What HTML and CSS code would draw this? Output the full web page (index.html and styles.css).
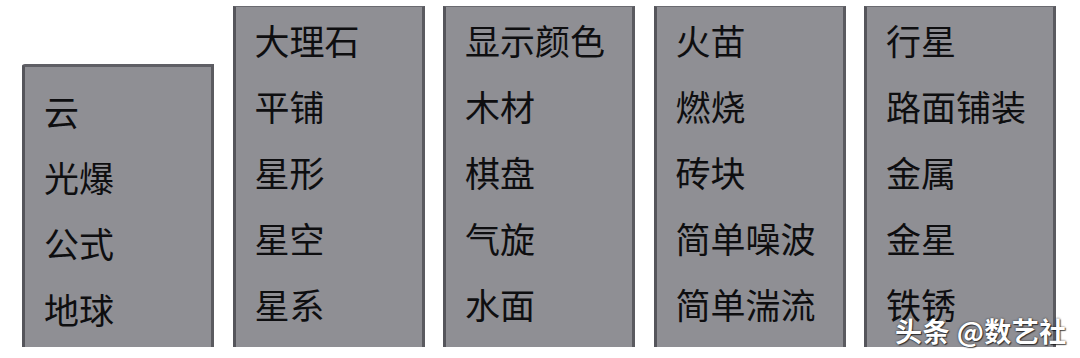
FILE: index.html
```html
<!DOCTYPE html>
<html lang="zh-CN">
<head>
<meta charset="utf-8">
<title>纹理菜单</title>
<link rel="stylesheet" href="styles.css">
</head>
<body>
<div class="stage">
  <ul class="menu menu-short">
    <li>云</li>
    <li>光爆</li>
    <li>公式</li>
    <li>地球</li>
  </ul>
  <ul class="menu">
    <li>大理石</li>
    <li>平铺</li>
    <li>星形</li>
    <li>星空</li>
    <li>星系</li>
  </ul>
  <ul class="menu">
    <li>显示颜色</li>
    <li>木材</li>
    <li>棋盘</li>
    <li>气旋</li>
    <li>水面</li>
  </ul>
  <ul class="menu">
    <li>火苗</li>
    <li>燃烧</li>
    <li>砖块</li>
    <li>简单噪波</li>
    <li>简单湍流</li>
  </ul>
  <ul class="menu">
    <li>行星</li>
    <li>路面铺装</li>
    <li>金属</li>
    <li>金星</li>
    <li>铁锈</li>
  </ul>
  <div class="watermark">头条 @数艺社</div>
</div>
</body>
</html>
```

FILE: styles.css
```css
html, body {
  margin: 0;
  padding: 0;
  background: #ffffff;
}

.stage {
  position: relative;
  width: 1080px;
  height: 358px;
  box-sizing: border-box;
  display: flex;
  align-items: flex-end;
  gap: 18.5px;
  padding: 0 0 11px 22px;
}

.menu {
  list-style: none;
  margin: 0;
  box-sizing: border-box;
  width: 192px;
  height: 341px;
  padding: 0 0 0 19px;
  background: #8f8f94;
  border-left: 3px solid #55555b;
  border-right: 3px solid #5b5b60;
  border-top: 1px solid #6a6a70;
  font-family: "Noto Sans CJK SC", "Noto Sans", sans-serif;
  font-size: 35px;
  font-weight: 400;
  line-height: 66px;
  color: #0e0e10;
}

.menu-short {
  height: 283px;
  padding-top: 11px;
  border-top: 3px solid #5f5f65;
  border-top-left-radius: 3px;
}

.menu li {
  white-space: nowrap;
  height: 66px;
}

.watermark {
  position: absolute;
  left: 895px;
  top: 314px;
  font-family: "Noto Sans CJK SC", "Noto Sans", sans-serif;
  font-size: 27px;
  font-weight: 700;
  letter-spacing: 0.5px;
  line-height: 34px;
  color: #ffffff;
  text-shadow: 0 0 2px rgba(0,0,0,0.75), 1px 1px 1px rgba(0,0,0,0.6);
}
```
